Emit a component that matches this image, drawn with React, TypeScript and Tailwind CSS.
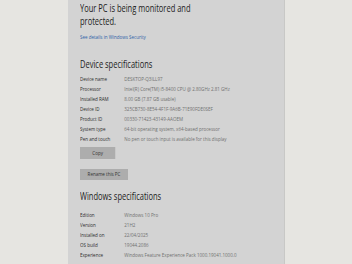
const device = [
  ["Device name", "DESKTOP-Q3ILL97"],
  ["Processor", "Intel(R) Core(TM) i5-8400 CPU @ 2.80GHz   2.81 GHz"],
  ["Installed RAM", "8.00 GB (7.87 GB usable)"],
  ["Device ID", "325CB730-8E54-4F1F-9A6B-71E90FDE0SEF"],
  ["Product ID", "00330-71423-43149-AAOEM"],
  ["System type", "64-bit operating system, x64-based processor"],
  ["Pen and touch", "No pen or touch input is available for this display"],
];

const windows = [
  ["Edition", "Windows 10 Pro"],
  ["Version", "21H2"],
  ["Installed on", "22/04/2025"],
  ["OS build", "19044.2086"],
  ["Experience", "Windows Feature Experience Pack 1000.19041.1000.0"],
];

function SpecRows({ rows }: { rows: string[][] }) {
  return (
    <div className="flex flex-col">
      {rows.map(([k, v]) => (
        <div key={k} className="flex h-[10px] items-center text-[6px] leading-none whitespace-nowrap">
          <span className="w-[59px] shrink-0 text-[#2b2b2b]">{k}</span>
          <span className="text-[#707070]">{v}</span>
        </div>
      ))}
    </div>
  );
}

export default function App() {
  return (
    <div
      className="flex w-[352px] h-[264px] overflow-hidden bg-[#e6e5e1]"
      style={{ fontFamily: '"Open Sans", "Noto Sans", sans-serif' }}
    >
      <div className="w-[68px] shrink-0" />
      <div className="w-[217px] shrink-0 bg-[#d3d3d3] border-r border-[#c8c8c6] pl-[12px] overflow-hidden">
        {/* the screenshot is squeezed sideways, so the content is too */}
        <div className="w-[272px] origin-top-left scale-x-[0.75]">
          <div className="pt-[2px] text-[10px] leading-[13px] text-[#1c1c1c]">
            Your PC is being monitored and
            <br />
            protected.
          </div>
          <div className="mt-[6px] text-[6px] leading-none text-[#2d5fa8]">See details in Windows Security</div>
          <div className="mt-[19px] text-[10px] leading-none text-[#1c1c1c]">Device specifications</div>
          <div className="mt-[5px]">
            <SpecRows rows={device} />
          </div>
          <div className="mt-[3px] w-[47px] h-[12px] bg-[#adadad] flex items-center justify-center text-[6px] text-[#333]">
            Copy
          </div>
          <div className="mt-[10px] w-[64px] h-[11px] bg-[#adadad] flex items-center justify-center text-[6px] text-[#333]">
            Rename this PC
          </div>
          <div className="mt-[11px] text-[10px] leading-none text-[#1c1c1c]">Windows specifications</div>
          <div className="mt-[9px]">
            <SpecRows rows={windows} />
          </div>
          <div className="mt-[4px] w-[47px] h-[12px] bg-[#adadad]" />
        </div>
      </div>
      <div className="flex-1" />
    </div>
  );
}
